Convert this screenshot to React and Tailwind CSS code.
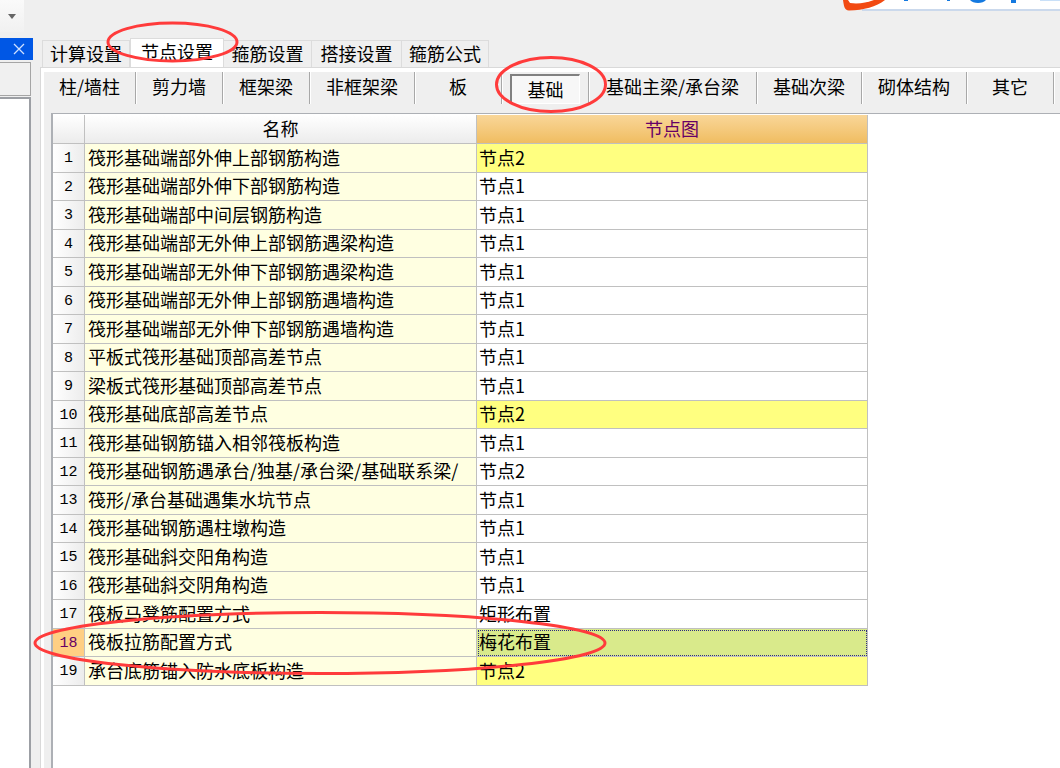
import React from "react";

const font = "font-['Noto_Sans_CJK_SC',sans-serif]";

const tabs = [
  { name: "计算设置", width: "w-[88px]" },
  { name: "节点设置", width: "w-[94px]" },
  { name: "箍筋设置", width: "w-[88px]" },
  { name: "搭接设置", width: "w-[90px]" },
  { name: "箍筋公式", width: "w-[87px]" },
];

const parts = [
  { name: "柱/墙柱", width: "w-[92px]" },
  { name: "剪力墙", width: "w-[87px]" },
  { name: "框架梁", width: "w-[87px]" },
  { name: "非框架梁", width: "w-[105px]" },
  { name: "板", width: "w-[87px]" },
  { name: "基础", width: "w-[87px]" },
  { name: "基础主梁/承台梁", width: "w-[168px]" },
  { name: "基础次梁", width: "w-[105px]" },
  { name: "砌体结构", width: "w-[105px]" },
  { name: "其它", width: "w-[87px]" },
];

const rows = [
  { name: "筏形基础端部外伸上部钢筋构造", node: "节点2", changed: true },
  { name: "筏形基础端部外伸下部钢筋构造", node: "节点1" },
  { name: "筏形基础端部中间层钢筋构造", node: "节点1" },
  { name: "筏形基础端部无外伸上部钢筋遇梁构造", node: "节点1" },
  { name: "筏形基础端部无外伸下部钢筋遇梁构造", node: "节点1" },
  { name: "筏形基础端部无外伸上部钢筋遇墙构造", node: "节点1" },
  { name: "筏形基础端部无外伸下部钢筋遇墙构造", node: "节点1" },
  { name: "平板式筏形基础顶部高差节点", node: "节点1" },
  { name: "梁板式筏形基础顶部高差节点", node: "节点1" },
  { name: "筏形基础底部高差节点", node: "节点2", changed: true },
  { name: "筏形基础钢筋锚入相邻筏板构造", node: "节点1" },
  { name: "筏形基础钢筋遇承台/独基/承台梁/基础联系梁/", node: "节点2" },
  { name: "筏形/承台基础遇集水坑节点", node: "节点1" },
  { name: "筏形基础钢筋遇柱墩构造", node: "节点1" },
  { name: "筏形基础斜交阳角构造", node: "节点1" },
  { name: "筏形基础斜交阴角构造", node: "节点1" },
  { name: "筏板马凳筋配置方式", node: "矩形布置" },
  { name: "筏板拉筋配置方式", node: "梅花布置", selected: true },
  { name: "承台底筋锚入防水底板构造", node: "节点2", changed: true },
];

const TopBar = () => (
  <header className="flex h-[38px] items-start justify-between">
    <button
      aria-label="更多"
      className="flex h-8 w-6 items-center justify-center bg-gradient-to-b from-[#fafafa] to-[#f1f1f1]"
    >
      <svg width="8" height="5" viewBox="0 0 8 5">
        <path d="M0 0h8L4 5z" fill="#666" />
      </svg>
    </button>
    <svg width="220" height="11" viewBox="0 0 220 11">
      <path d="M22 0H220V9H22z" fill="#fff" />
      <path d="M22 9H220V11H22z" fill="#cbd9ec" />
      <path d="M3 0C4 6 4 10 9 10.500C24 10 36 7 45 0z" fill="#f24a12" />
      <path d="M8 0L10 3C18 4 26 3 34 0z" fill="#fff" />
      <path d="M64 0h4v1h-4zM107 0h3v1h-3zM130 0h16c-3 4-13 4-16 0zM171 0h5v3h-5z" fill="#1479e0" />
      <path d="M200 0h20v1h-20z" fill="#c9e0f8" />
    </svg>
  </header>
);

const SidePanel = () => (
  <aside className="flex w-[33px] flex-col">
    <div className="flex h-[22px] justify-end bg-[#0057e5]">
      <button aria-label="关闭" className="flex w-7 items-center justify-center">
        <svg width="12" height="12" viewBox="0 0 12 12">
          <path d="M1 1L11 11M11 1L1 11" stroke="#cfe0ff" strokeWidth="1.3" />
        </svg>
      </button>
    </div>
    <div className="mt-[2px] mr-[2px] h-[34px] border border-l-0 border-[#a5a5a5] bg-[#f0f0f0]" />
    <div className="mt-px mr-[2px] flex-1 border-t-2 border-r-2 border-[#9c9fa4] bg-white" />
  </aside>
);

const Tabs = () => (
  <div role="tablist" className="flex h-[29px] items-end pl-[2px]">
    {tabs.map(({ name, width }) => {
      const active = name === "节点设置";
      return (
        <button
          key={name}
          role="tab"
          aria-selected={active}
          className={`${width} flex items-start justify-center border border-b-0 border-[#dcdcdc] ${
            active ? "-mb-[2px] h-[31px] bg-white" : "h-[27px] border-l-0 first:border-l"
          }`}
        >
          {name}
        </button>
      );
    })}
  </div>
);

const PartBar = () => (
  <nav className="flex h-[41px] items-start overflow-hidden bg-[#efefef]">
    {parts.map(({ name, width }) => (
      <div
        key={name}
        className={`${width} flex h-8 shrink-0 items-start justify-center border-r border-[#a8a8a8] pt-[2px] shadow-[1px_0_0_#fff]`}
      >
        {name === "基础" ? (
          <button
            aria-pressed="true"
            className="h-[30px] w-[70px] border-t-2 border-r border-b border-l-2 border-t-[#808080] border-r-white border-b-white border-l-[#808080] bg-[#f7f7f7] pb-px"
          >
            {name}
          </button>
        ) : (
          <button>{name}</button>
        )}
      </div>
    ))}
  </nav>
);

const nodeColor = (row) => {
  if (row.selected) return "bg-[#d9ea8b] outline-1 -outline-offset-2 outline-dotted outline-[#2b2b80]";
  if (row.changed) return "bg-[#ffff80]";
  return "bg-white";
};

const NodeTable = () => (
  <table className="w-[815px] table-fixed border-separate border-spacing-0">
    <colgroup>
      <col className="w-8" />
      <col className="w-[392px]" />
      <col />
    </colgroup>
    <thead>
      <tr className="h-[29px]">
        <th className="border-r border-b border-[#c0c0c0] bg-gradient-to-b from-white to-[#ececec] p-0" />
        <th className="border-r border-b border-[#c0c0c0] bg-gradient-to-b from-white to-[#ececec] px-0 pt-0 pb-[3px] font-normal">
          名称
        </th>
        <th className="border-r border-b border-[#c0c0c0] bg-gradient-to-b from-[#f9d698] to-[#f0bd60] px-0 pt-0 pb-[3px] font-normal text-[#660066]">
          节点图
        </th>
      </tr>
    </thead>
    <tbody>
      {rows.map((row, i) => (
        <tr key={row.name} className="odd:h-[29px] even:h-[28px]">
          <th
            className={`border-r border-b border-[#c0c0c0] px-0 pt-[2px] pb-0 font-['Liberation_Mono',monospace] text-[15px] font-normal ${
              row.selected ? "bg-[#ffcf83] text-[#660066]" : "bg-gradient-to-r from-white to-[#ececec]"
            }`}
          >
            {i + 1}
          </th>
          <td className="overflow-hidden border-r border-b border-[#c0c0c0] bg-[#ffffe1] pt-0 pr-0 pb-[3px] pl-[3px] whitespace-nowrap">
            {row.name}
          </td>
          <td className={`border-r border-b border-[#c0c0c0] pt-0 pr-0 pb-[3px] pl-[2px] ${nodeColor(row)}`}>
            {row.node}
          </td>
        </tr>
      ))}
    </tbody>
  </table>
);

// Red circles over the settings that need checking
const Marks = () => (
  <svg
    className="pointer-events-none absolute top-0 left-0"
    width="620"
    height="690"
    fill="none"
    stroke="#ff3b3b"
    strokeWidth="3"
  >
    <ellipse cx="172.5" cy="42" rx="64.5" ry="19" />
    <ellipse cx="551" cy="84.5" rx="54.5" ry="27" />
    <ellipse cx="320" cy="643" rx="285" ry="30.5" />
  </svg>
);

export default function App() {
  return (
    <div className={`relative flex min-h-screen flex-col overflow-hidden bg-[#efefef] text-lg leading-6 text-black ${font}`}>
      <TopBar />
      <div className="flex flex-1">
        <SidePanel />
        <main className="ml-[7px] flex min-w-0 flex-1 flex-col">
          <Tabs />
          <div className="flex flex-1 flex-col border-t border-l border-[#d9d9d9]">
            <div className="flex flex-1 flex-col border-t-4 border-l-[3px] border-white">
              <PartBar />
              <section className="ml-[7px] flex-1 border-t border-l-2 border-[#adb0b5] bg-white pt-px">
                <NodeTable />
              </section>
            </div>
          </div>
        </main>
      </div>
      <Marks />
    </div>
  );
}
